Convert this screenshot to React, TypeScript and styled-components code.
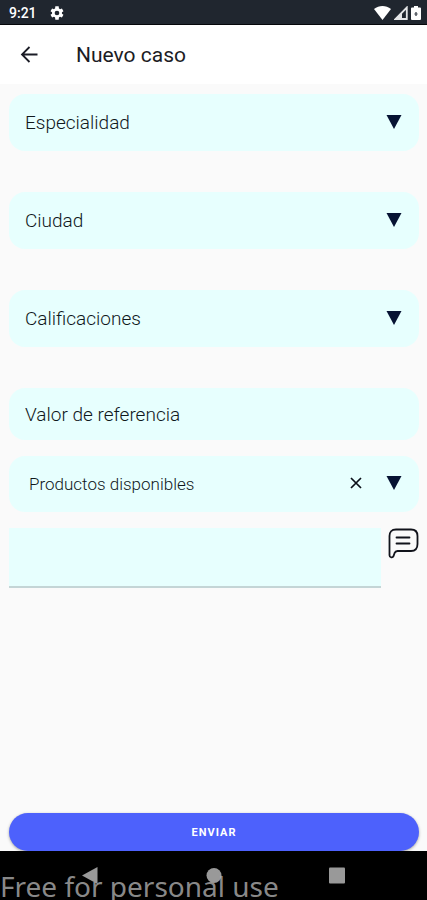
import React, { useState } from "react";
import styled, { createGlobalStyle } from "styled-components";

const GlobalStyle = createGlobalStyle`
  * { box-sizing: border-box; }
  body { margin: 0; background: #fafafa; font-family: Roboto, sans-serif; color: #10151f; }
  button, input, select, textarea { font: inherit; color: inherit; border: 0; margin: 0; padding: 0; background: none; }
`;

const Screen = styled.div`
  display: flex;
  flex-direction: column;
  min-height: 100vh;
`;

const StatusBar = styled.div`
  display: flex;
  align-items: center;
  justify-content: space-between;
  height: 25px;
  padding: 1px 6px 0 9px;
  background: #20262f;
  border-bottom: 1px solid #05070a;
  color: #fff;
  font-size: 14px;
  font-weight: 500;
`;

const StatusGroup = styled.div<{ $gap: number }>`
  display: flex;
  align-items: center;
  gap: ${(p) => p.$gap}px;
`;

const Header = styled.header`
  display: flex;
  align-items: center;
  gap: 36px;
  height: 59px;
  padding: 0 18px;
  background: #fff;
`;

const Title = styled.h1`
  margin: 0;
  font-size: 21px;
  line-height: 24px;
  font-weight: 400;
  color: #1c1c24;
`;

const IconButton = styled.button`
  display: flex;
  flex: none;
  cursor: pointer;
`;

const Form = styled.form`
  display: flex;
  flex: 1;
  flex-direction: column;
  padding: 10px 8px 0 9px;
`;

const Group = styled.div<{ $gap: number }>`
  display: flex;
  flex-direction: column;
  gap: ${(p) => p.$gap}px;
`;

const Field = styled.div<{ $height?: number }>`
  position: relative;
  height: ${(p) => p.$height ?? 57}px;
  border-radius: 16px;
  background: #e7fffe;
`;

const Select = styled.select<{ $small?: boolean }>`
  appearance: none;
  width: 100%;
  height: 100%;
  padding: 0 72px 0 ${(p) => (p.$small ? 20 : 16)}px;
  font-size: ${(p) => (p.$small ? 17 : 19)}px;
  font-weight: 300;
  color: #10181c;
`;

const TextInput = styled.input`
  width: 100%;
  height: 100%;
  padding: 0 16px;
  font-size: 19px;
  font-weight: 300;
  border-radius: 16px;
  &::placeholder { color: #10181c; opacity: 1; }
`;

const Adornments = styled.div`
  position: absolute;
  top: 0;
  bottom: 2px;
  right: 17px;
  display: flex;
  align-items: center;
  gap: 24px;
  pointer-events: none;
  ${IconButton} { pointer-events: auto; }
`;

const NoteRow = styled.div`
  display: flex;
  align-items: flex-start;
  gap: 7px;
`;

const Note = styled.textarea`
  flex: 1;
  min-width: 0;
  height: 60px;
  padding: 8px 16px;
  resize: none;
  background: #e7fffe;
  border-bottom: 2px solid #c4d5d6;
  font-size: 19px;
`;

const Submit = styled.button`
  height: 38px;
  margin-top: auto;
  border-radius: 19px;
  background: #4d61fc;
  box-shadow: 0 1px 3px rgba(0, 0, 0, 0.35);
  color: #fff;
  font-size: 11px;
  font-weight: 700;
  letter-spacing: 1px;
  cursor: pointer;
`;

const NavBar = styled.nav`
  position: relative;
  display: grid;
  grid-template-columns: 1fr 16px 1fr;
  height: 49px;
  padding-top: 16px;
  background: #000;
  overflow: hidden;
`;

const NavButton = styled.button<{ $side?: "start" | "end" }>`
  display: flex;
  height: 17px;
  justify-self: ${(p) => p.$side ?? "center"};
  margin-left: ${(p) => (p.$side === "start" ? 82 : 0)}px;
  margin-right: ${(p) => (p.$side === "end" ? 82 : 0)}px;
`;

const Watermark = styled.span`
  position: absolute;
  left: 0;
  bottom: -5px;
  font-family: "Noto Sans", sans-serif;
  font-size: 28px;
  line-height: 38px;
  white-space: nowrap;
  color: rgba(175, 175, 175, 0.8);
  pointer-events: none;
`;

const Triangle = () => (
  <svg width="16" height="14" viewBox="0 0 16 14" aria-hidden="true">
    <path d="M.5 0h15L8 14z" fill="#061333" />
  </svg>
);

const GearIcon = () => (
  <svg width="16" height="16" viewBox="0 0 24 24" aria-hidden="true">
    <path
      fill="#fff"
      fillRule="evenodd"
      d="M19.400 13a7.500 7.500 0 0 0 0-2l2.300-1.800-2.300-4-2.800 1.100a7.500 7.500 0 0 0-1.700-1L14.500 2h-5l-.4 3.300a7.500 7.500 0 0 0-1.700 1L4.600 5.200l-2.300 4L4.600 11a7.500 7.500 0 0 0 0 2l-2.300 1.800 2.300 4 2.800-1.100c.5.4 1.100.7 1.700 1l.4 3.300h5l.4-3.300c.6-.3 1.200-.6 1.700-1l2.800 1.100 2.300-4zM12 15.500a3.500 3.500 0 1 1 0-7 3.500 3.500 0 0 1 0 7z"
    />
  </svg>
);

const WifiIcon = () => (
  <svg width="17" height="14" viewBox="0 0 17 14" aria-hidden="true">
    <path d="M0 3C5-1 12-1 17 3L8.500 14z" fill="#fff" />
  </svg>
);

const SignalIcon = () => (
  <svg width="14" height="14" viewBox="0 0 14 14" aria-hidden="true">
    <path d="M12.800 1.500v11.500H1.500z" fill="none" stroke="#e4e5e7" strokeWidth="1.800" />
    <path d="M0 14 8 6v8z" fill="#e4e5e7" />
  </svg>
);

const BatteryIcon = () => (
  <svg width="10" height="14" viewBox="0 0 10 14" aria-hidden="true">
    <path d="M3 0h4v1.500h2q1 0 1 1V13q0 1-1 1H1q-1 0-1-1V2.500q0-1 1-1h2z" fill="#fff" />
    <path d="M5 6v4M3.500 8h3" stroke="#555b63" strokeWidth="1.500" />
  </svg>
);

const BackIcon = () => (
  <svg width="22" height="22" viewBox="0 0 22 22" fill="none" stroke="#1b1c26" strokeWidth="1.800" aria-hidden="true">
    <path d="M19.500 10.500H4M11.500 3 4 10.500l7.500 7.500" />
  </svg>
);

const ClearIcon = () => (
  <svg width="12" height="12" viewBox="0 0 12 12" fill="none" stroke="#0b0f18" strokeWidth="1.700" aria-hidden="true">
    <path d="m1 1 10 10M11 1 1 11" />
  </svg>
);

const CommentIcon = () => (
  <svg width="31" height="31" viewBox="0 0 31 31" fill="none" stroke="#11131b" strokeWidth="1.800" strokeLinecap="round" strokeLinejoin="round" aria-hidden="true">
    <path d="M8 1.500h15c4.500 0 6.500 2.500 6.500 6.500v8c0 4.500-2 7-6.500 7H9.500c-1.500 0-2.500 1-3 2.200l-1 3c-.8 2-4 1.500-4-1V8c0-4 2-6.500 6.500-6.500z" />
    <path d="M8.500 9.500h13M8.500 15.500h13" />
  </svg>
);

const selects = ["Especialidad", "Ciudad", "Calificaciones"];

export default function App() {
  const [product, setProduct] = useState("default");

  return (
    <Screen>
      <GlobalStyle />
      <StatusBar>
        <StatusGroup $gap={12}>
          <span>9:21</span>
          <GearIcon />
        </StatusGroup>
        <StatusGroup $gap={3}>
          <WifiIcon />
          <SignalIcon />
          <BatteryIcon />
        </StatusGroup>
      </StatusBar>
      <Header>
        <IconButton type="button" aria-label="Volver">
          <BackIcon />
        </IconButton>
        <Title>Nuevo caso</Title>
      </Header>
      <Form onSubmit={(e) => e.preventDefault()}>
        <Group $gap={16}>
          <Group $gap={41}>
            {selects.map((name) => (
              <Field key={name}>
                <Select aria-label={name}>
                  <option>{name}</option>
                </Select>
                <Adornments>
                  <Triangle />
                </Adornments>
              </Field>
            ))}
            <Field $height={52}>
              <TextInput aria-label="Valor de referencia" placeholder="Valor de referencia" />
            </Field>
          </Group>
          <Field $height={56}>
            <Select $small aria-label="Productos disponibles" value={product} onChange={(e) => setProduct(e.target.value)}>
              <option value="default">Productos disponibles</option>
            </Select>
            <Adornments>
              <IconButton type="button" aria-label="Borrar" onClick={() => setProduct("default")}>
                <ClearIcon />
              </IconButton>
              <Triangle />
            </Adornments>
          </Field>
          <NoteRow>
            <Note aria-label="Comentario" />
            <IconButton type="button" aria-label="Enviar comentario">
              <CommentIcon />
            </IconButton>
          </NoteRow>
        </Group>
        <Submit type="submit">ENVIAR</Submit>
      </Form>
      <NavBar>
        <NavButton $side="start" aria-label="Atrás">
          <svg width="16" height="17" viewBox="0 0 16 17"><path d="M15.500 0v17L0 8.500z" fill="#999" /></svg>
        </NavButton>
        <NavButton aria-label="Inicio">
          <svg width="16" height="17" viewBox="0 0 16 17"><circle cx="8" cy="8.500" r="7.500" fill="#999" /></svg>
        </NavButton>
        <NavButton $side="end" aria-label="Recientes">
          <svg width="16" height="17" viewBox="0 0 16 17"><rect y=".5" width="16" height="16" rx="1" fill="#999" /></svg>
        </NavButton>
        <Watermark>Free for personal use</Watermark>
      </NavBar>
    </Screen>
  );
}
